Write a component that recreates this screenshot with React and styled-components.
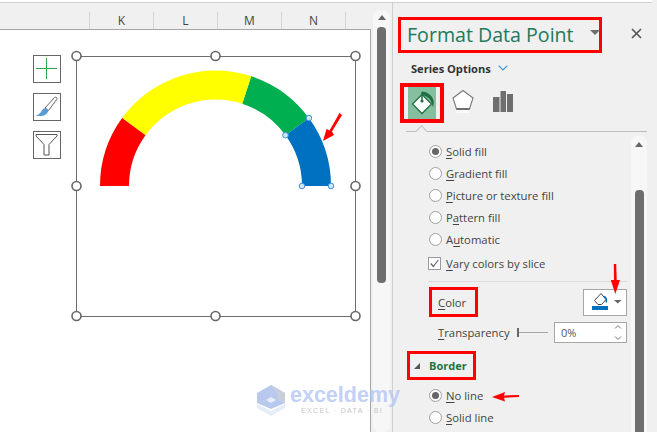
import React from "react";
import styled, { createGlobalStyle } from "styled-components";

const Global = createGlobalStyle`
  html, body { margin: 0; padding: 0; background: #f0f0f0; }
  body { width: 657px; height: 432px; overflow: hidden; font-family: "Open Sans", "Noto Sans", sans-serif; }
  u { text-underline-offset: 2px; text-decoration-thickness: 1px; }
`;

const Window = styled.div`
  position: relative;
  width: 657px;
  height: 432px;
  overflow: hidden;
  background: #f0f0f0;
`;
const TopStrip = styled.div`
  width: 653px;
  height: 3px;
  box-sizing: border-box;
  background: #fff;
  border-bottom: 1px solid #cfcfcf;
  border-bottom-right-radius: 3px;
`;
const Frame = styled.div`
  display: flex;
  height: 429px;
`;
const SheetColumn = styled.div`
  width: 371px;
  flex: none;
  display: flex;
  flex-direction: column;
`;
const ColumnHeaders = styled.div`
  height: 26px;
  flex: none;
  display: flex;
  padding: 9px 0 0 89px;
  box-sizing: border-box;
`;
const ColumnHead = styled.div`
  width: 64px;
  flex: none;
  height: 17px;
  box-sizing: border-box;
  border-left: 1px solid #d4d4d4;
  font-size: 12px;
  line-height: 17px;
  text-align: center;
  color: #444;
`;
const Sheet = styled.div`
  flex: 1;
  background: #fff;
  border-top: 1px solid #a6a6a6;
  border-right: 1px solid #a6a6a6;
  display: flex;
  align-items: flex-start;
  padding: 16px 0 0 33px;
  box-sizing: border-box;
`;
const Flyouts = styled.div`
  width: 28px;
  flex: none;
  margin-top: 9px;
  display: flex;
  flex-direction: column;
  gap: 10px;
`;
const Flyout = styled.div`
  width: 28px;
  height: 28px;
  box-sizing: border-box;
  border: 1px solid #666;
  background: #fff;
  display: flex;
`;
const Chart = styled.svg`
  width: 300px;
  height: 280px;
  flex: none;
  margin-left: 5px;
`;
const PaneScroll = styled.div`
  width: 21px;
  flex: none;
  box-sizing: border-box;
  padding: 7px 2px 0;
`;
const ScrollTrack = styled.div`
  background: #f7f7f7;
  border-radius: 7px;
  height: ${(p) => p.$h}px;
  display: flex;
  flex-direction: column;
  align-items: center;
  box-sizing: border-box;
`;
const ScrollUp = styled.div`
  width: 0;
  height: 0;
  border-left: 4px solid transparent;
  border-right: 4px solid transparent;
  border-bottom: 5px solid #666;
  flex: none;
  margin-top: ${(p) => p.$mt}px;
`;
const Thumb = styled.div`
  width: 9px;
  flex: none;
  background: #6e6e6e;
  border-radius: 4px;
  height: ${(p) => p.$h}px;
  margin-top: ${(p) => p.$mt}px;
`;
const Panel = styled.div`
  flex: 1;
  display: flex;
  flex-direction: column;
  min-width: 0;
  box-shadow: inset 1px 0 #cfcfcf;
`;
const PanelHead = styled.div`
  display: flex;
  align-items: center;
  height: 36px;
  margin-top: 14px;
  padding-left: 6px;
  flex: none;
`;
const TitleBox = styled.div`
  width: 204px;
  height: 36px;
  box-sizing: border-box;
  border: 3px solid #f00;
  display: flex;
  align-items: center;
  justify-content: space-between;
  padding: 0 0 2px 6px;
`;
const Title = styled.span`
  font-size: 19.6px;
  color: #217a5a;
  white-space: nowrap;
`;
const Caret = styled.span`
  width: 0;
  height: 0;
  border-left: 5px solid transparent;
  border-right: 5px solid transparent;
  border-top: 5px solid #6e6e6e;
  flex: none;
  margin: -3px -1px 0 0;
`;
const Close = styled.svg`
  width: 11px;
  height: 11px;
  margin: -4px 0 0 29px;
  flex: none;
`;
const SeriesRow = styled.div`
  display: flex;
  align-items: center;
  gap: 7px;
  height: 18px;
  margin-top: 6px;
  padding-left: 19px;
  font-size: 11.1px;
  font-weight: 700;
  color: #333;
  flex: none;
`;
const Tabs = styled.div`
  display: flex;
  align-items: center;
  height: 40px;
  margin-top: 6px;
  padding-left: 8px;
  flex: none;
`;
const ActiveTab = styled.div`
  width: 44px;
  height: 40px;
  box-sizing: border-box;
  border: 4px solid #f00;
  padding: 0 4px;
  display: flex;
`;
const TabFill = styled.div`
  flex: 1;
  background: #86bf9f;
  display: flex;
`;
const TabIcon = styled.svg`
  width: 24px;
  height: 28px;
  flex: none;
  margin-left: ${(p) => p.$ml}px;
`;
const Notched = styled.div`
  position: relative;
  height: 1px;
  margin: 8px 10px 0 14px;
  background: #bdbdbd;
  flex: none;
`;
const Notch = styled.span`
  position: absolute;
  left: 11px;
  top: -4px;
  width: 9px;
  height: 9px;
  box-sizing: border-box;
  border-left: 1px solid #bdbdbd;
  border-top: 1px solid #bdbdbd;
  background: #f0f0f0;
  transform: rotate(45deg);
`;
const Body = styled.div`
  flex: 1;
  display: flex;
  min-height: 0;
`;
const Options = styled.div`
  width: 239px;
  flex: none;
  padding-top: 8px;
  box-sizing: border-box;
`;
const Choice = styled.div`
  display: flex;
  align-items: center;
  height: 22px;
  padding-left: 37px;
  gap: 4px;
  font-size: 11.3px;
  color: #444;
  white-space: nowrap;
`;
const Radio = styled.span`
  width: 13px;
  height: 13px;
  box-sizing: border-box;
  border: 1px solid #a0a0a0;
  border-radius: 50%;
  background: #fff;
  flex: none;
  display: flex;
  align-items: center;
  justify-content: center;
  &::after {
    content: "";
    width: 7px;
    height: 7px;
    border-radius: 50%;
    background: ${(p) => (p.$on ? "#666" : "transparent")};
  }
`;
const CheckRow = styled(Choice)`
  padding-left: 36px;
  margin-top: 2px;
  gap: 5px;
`;
const CheckBox = styled.svg`
  width: 13px;
  height: 13px;
  flex: none;
`;
const Divider = styled.div`
  height: 1px;
  background: #dcdcdc;
  margin: 7px 0 0 36px;
  width: 199px;
`;
const ColorRow = styled.div`
  display: flex;
  align-items: center;
  justify-content: space-between;
  height: 30px;
  margin-top: 5px;
  padding: 0 4px 0 37px;
`;
const Boxed = styled.div`
  width: 49px;
  height: 30px;
  box-sizing: border-box;
  border: 3px solid #f00;
  display: flex;
  align-items: center;
  padding-left: 6px;
  font-size: 11.3px;
  color: #444;
`;
const ColorButton = styled.div`
  width: 44px;
  height: 27px;
  box-sizing: border-box;
  border: 1px solid #a6a6a6;
  background: #fff;
  display: flex;
`;
const TransRow = styled.div`
  display: flex;
  align-items: center;
  height: 22px;
  margin-top: 4px;
  padding-left: 46px;
  font-size: 11.3px;
  color: #444;
`;
const TransLabel = styled.span`
  width: 79px;
  flex: none;
`;
const Slider = styled.div`
  width: 31px;
  height: 1px;
  background: #a6a6a6;
  margin-right: 6px;
  flex: none;
  position: relative;
  &::before {
    content: "";
    position: absolute;
    left: 0;
    top: -4px;
    width: 2px;
    height: 9px;
    background: #666;
  }
`;
const Percent = styled.div`
  width: 73px;
  height: 21px;
  flex: none;
  box-sizing: border-box;
  border: 1px solid #a6a6a6;
  background: #fff;
  display: flex;
  align-items: center;
  justify-content: space-between;
  padding: 0 4px 0 6px;
  font-size: 11px;
  color: #555;
`;
const Spin = styled.svg`
  width: 8px;
  height: 17px;
  flex: none;
`;
const BorderHead = styled.div`
  width: 69px;
  height: 29px;
  box-sizing: border-box;
  border: 3px solid #f00;
  margin: 8px 0 0 15px;
  display: flex;
  align-items: center;
  gap: 9px;
  padding-left: 4px;
  font-size: 11px;
  font-weight: 700;
  color: #217346;
`;
const Tri = styled.span`
  width: 0;
  height: 0;
  border-left: 6px solid transparent;
  border-bottom: 6px solid #555;
  flex: none;
`;
const LineChoices = styled.div`
  margin-top: 4px;
`;
const RightScroll = styled.div`
  width: 16px;
  margin-top: 4px;
  flex: none;
`;
const Overlay = styled.svg`
  position: absolute;
  left: 0;
  top: 0;
  width: 657px;
  height: 432px;
  pointer-events: none;
`;
const Watermark = styled.div`
  position: absolute;
  left: 257px;
  top: 385px;
  display: flex;
  gap: 5px;
  pointer-events: none;
`;
const WmText = styled.div`
  display: flex;
  flex-direction: column;
`;
const WmName = styled.span`
  font-family: "Liberation Sans", sans-serif;
  font-size: 21.5px;
  font-weight: 700;
  line-height: 21px;
  color: #b9c9f5;
  opacity: 0.85;
  white-space: nowrap;
`;
const WmTag = styled.span`
  font-family: "Liberation Sans", sans-serif;
  font-size: 7px;
  letter-spacing: 1.35px;
  line-height: 9px;
  margin-left: 11px;
  color: #c6c6c6;
  white-space: nowrap;
`;

const handles = [
  [76.5, 56], [215.5, 56], [355.5, 56], [76.5, 186], [355.5, 186], [76.5, 316], [215.5, 316], [355.5, 316],
];
const points = [[285.5, 135.2], [308.9, 118.1], [302, 186], [331, 186]];
const R = 115.5;
const r = 86.5;
const seg = (a, b, c, d) =>
  `M${a} A${R} ${R} 0 0 0 ${b} L${c} A${r} ${r} 0 0 1 ${d} Z`;

const redArrow = (d) => <path d={d} fill="#f00" />;

export default function App() {
  return (
    <Window>
      <Global />
      <TopStrip />
      <Frame>
        <SheetColumn>
          <ColumnHeaders>
            {["K", "L", "M", "N"].map((c) => (
              <ColumnHead key={c}>{c}</ColumnHead>
            ))}
            <ColumnHead />
          </ColumnHeaders>
          <Sheet>
            <Flyouts>
              <Flyout>
                <svg viewBox="0 0 26 26" width="26" height="26">
                  <path d="M12.5 2v21M2 12.500h21" stroke="#2ea44f" strokeWidth="1" fill="none" />
                </svg>
              </Flyout>
              <Flyout>
                <svg viewBox="0 0 26 26" width="26" height="26">
                  <path d="M20.500 3.500c1.500-1 3 .3 2.300 1.800L14.500 16.500 11 14Z" fill="#fff" stroke="#666" strokeWidth="1" />
                  <path d="M11 14c-2 .5-3 2-4 4-1 1.500-3 3-5.500 3.500 3 .8 7 1 9.500-.5 2-1.200 3.200-3 3.500-4.500Z" fill="#5b9bd5" />
                </svg>
              </Flyout>
              <Flyout>
                <svg viewBox="0 0 26 26" width="26" height="26">
                  <path d="M2 2.500h21v1.500L15 12.500V23h-5V12.500L2 4Z" fill="#fff" stroke="#555" strokeWidth="1" />
                </svg>
              </Flyout>
            </Flyouts>
            <Chart viewBox="66 46 300 280">
              <rect x="76.5" y="56.5" width="279" height="260" fill="none" stroke="#6e6e6e" strokeWidth="1" />
              <path d={seg("308.9 118.1", "251.2 76.2", "242.2 103.7", "285.5 135.2")} fill="#00b050" />
              <path d={seg("251.2 76.2", "122.1 118.1", "145.5 135.2", "242.2 103.7")} fill="#ffff00" />
              <path d={seg("122.1 118.1", "100 186", "129 186", "145.5 135.2")} fill="#ff0000" />
              <path d={seg("331 186", "308.9 118.1", "285.5 135.2", "302 186")} fill="#0070c0" />
              {handles.map(([x, y]) => (
                <circle key={`${x}-${y}`} cx={x} cy={y} r="4.5" fill="#fff" stroke="#666" strokeWidth="1.6" />
              ))}
              {points.map(([x, y]) => (
                <circle key={`${x}-${y}`} cx={x} cy={y} r="2.8" fill="#cfe6fb" stroke="#3d8ee0" strokeWidth="1" />
              ))}
              {redArrow("M339.500 113 342 115 332 131.500 334 135 323 141 326.500 129 329.500 130.500Z")}
            </Chart>
          </Sheet>
        </SheetColumn>
        <PaneScroll>
          <ScrollTrack $h={422}>
            <ScrollUp $mt={5} />
            <Thumb $h={256} $mt={7} />
          </ScrollTrack>
        </PaneScroll>
        <Panel>
          <PanelHead>
            <TitleBox>
              <Title>Format Data Point</Title>
              <Caret />
            </TitleBox>
            <Close viewBox="0 0 11 11">
              <path d="M1 1l9 9M10 1l-9 9" stroke="#555" strokeWidth="1.6" fill="none" />
            </Close>
          </PanelHead>
          <SeriesRow>
            Series Options
            <svg width="10" height="6" viewBox="0 0 10 6">
              <path d="M.7.7 5 5l4.300-4.300" stroke="#3a8fd6" strokeWidth="1.1" fill="none" />
            </svg>
          </SeriesRow>
          <Tabs>
            <ActiveTab>
              <TabFill>
                <svg viewBox="0 0 28 32" width="28" height="32">
                  <path d="M14 7.500 4.500 17 14 26.500 23.500 17Z" fill="#fff" stroke="#1f6f45" strokeWidth="1.3" />
                  <path d="M14 5v9" stroke="#1f6f45" strokeWidth="1.5" />
                  <circle cx="14" cy="14" r="1.6" fill="#1f6f45" />
                  <path d="M14 4.500c5 .5 10 3.500 11.500 9 .5 2 .2 4.500-.5 7-.8-3-1.500-6-3-8-1.500-2-3.700-3.500-8-4.500Z" fill="#1f6f45" />
                </svg>
              </TabFill>
            </ActiveTab>
            <TabIcon $ml={7} viewBox="0 0 24 28">
              <path d="M12 1.500 22 9 18.500 20H5.500L2 9Z" fill="#fff" stroke="#777" strokeWidth="1.1" />
              <path d="M5.500 20h13" stroke="#6e6e6e" strokeWidth="2" />
              <path d="M6 21h12l1 3H5Z" fill="#fafafa" />
            </TabIcon>
            <TabIcon $ml={16} viewBox="0 0 24 28">
              <path d="M2 8h6.500v15H2zM9.500 2H15v21H9.500zM16 5h6v18h-6z" fill="#6e6e6e" />
            </TabIcon>
          </Tabs>
          <Notched>
            <Notch />
          </Notched>
          <Body>
            <Options>
              <Choice><Radio $on /><span><u>S</u>olid fill</span></Choice>
              <Choice><Radio /><span><u>G</u>radient fill</span></Choice>
              <Choice><Radio /><span><u>P</u>icture or texture fill</span></Choice>
              <Choice><Radio /><span>P<u>a</u>ttern fill</span></Choice>
              <Choice><Radio /><span>A<u>u</u>tomatic</span></Choice>
              <CheckRow>
                <CheckBox viewBox="0 0 13 13">
                  <rect x=".5" y=".5" width="12" height="12" fill="#fff" stroke="#9a9a9a" />
                  <path d="M2.800 6.500 5.300 9.500 10.300 3" stroke="#666" strokeWidth="1.2" fill="none" />
                </CheckBox>
                <span><u>V</u>ary colors by slice</span>
              </CheckRow>
              <Divider />
              <ColorRow>
                <Boxed><span><u>C</u>olor</span></Boxed>
                <ColorButton>
                  <svg viewBox="0 0 42 25" width="42" height="25">
                    <path d="M10.500 10.500 17 3.500l5 6-4.500 5h-3.500Z" fill="#fff" stroke="#444" strokeWidth="1" />
                    <path d="M20 6.500c2 1 2.700 3.500 2.200 6" stroke="#0070c0" strokeWidth="1.6" fill="none" />
                    <path d="M8 16h16v4H8Z" fill="#0070c0" />
                    <path d="M30 10h7.500l-3.750 3.500Z" fill="#666" />
                  </svg>
                </ColorButton>
              </ColorRow>
              <TransRow>
                <TransLabel><u>T</u>ransparency</TransLabel>
                <Slider />
                <Percent>
                  0%
                  <Spin viewBox="0 0 8 17">
                    <path d="M1 4.500 4 1.500 7 4.500M1 12.500l3 3 3-3" stroke="#777" strokeWidth="1" fill="none" />
                  </Spin>
                </Percent>
              </TransRow>
              <BorderHead><Tri />Border</BorderHead>
              <LineChoices>
                <Choice><Radio $on /><span><u>N</u>o line</span></Choice>
                <Choice><Radio /><span><u>S</u>olid line</span></Choice>
              </LineChoices>
            </Options>
            <RightScroll>
              <ScrollTrack $h={300}>
                <ScrollUp $mt={6} />
                <Thumb $h={245} $mt={43} />
              </ScrollTrack>
            </RightScroll>
          </Body>
        </Panel>
      </Frame>
      <Watermark>
        <svg width="28" height="31" viewBox="0 0 28 31">
          <path d="M14 0 28 8v10L14 24 0 18V8Z" fill="#b9c9ee" />
          <path d="M14 0 28 8v10l-7-4V9Z" fill="#c9cfd8" />
          <path d="M14 12l5 3-5 3-5-3Z" fill="#e6edf8" />
          <path d="M0 19 14 26 28 19v4L14 31 0 23Z" fill="#e6edf8" />
        </svg>
        <WmText>
          <WmName>exceldemy</WmName>
          <WmTag>EXCEL · DATA · BI</WmTag>
        </WmText>
      </Watermark>
      <Overlay viewBox="0 0 657 432">
        {redArrow("M613.800 264h2.400l.5 16H620l-4.700 14-4.500-14h3.200Z")}
        {redArrow("M492 397l13-5-1 3.500 15-.5v2l-15 .8 1 3.700Z")}
      </Overlay>
    </Window>
  );
}
